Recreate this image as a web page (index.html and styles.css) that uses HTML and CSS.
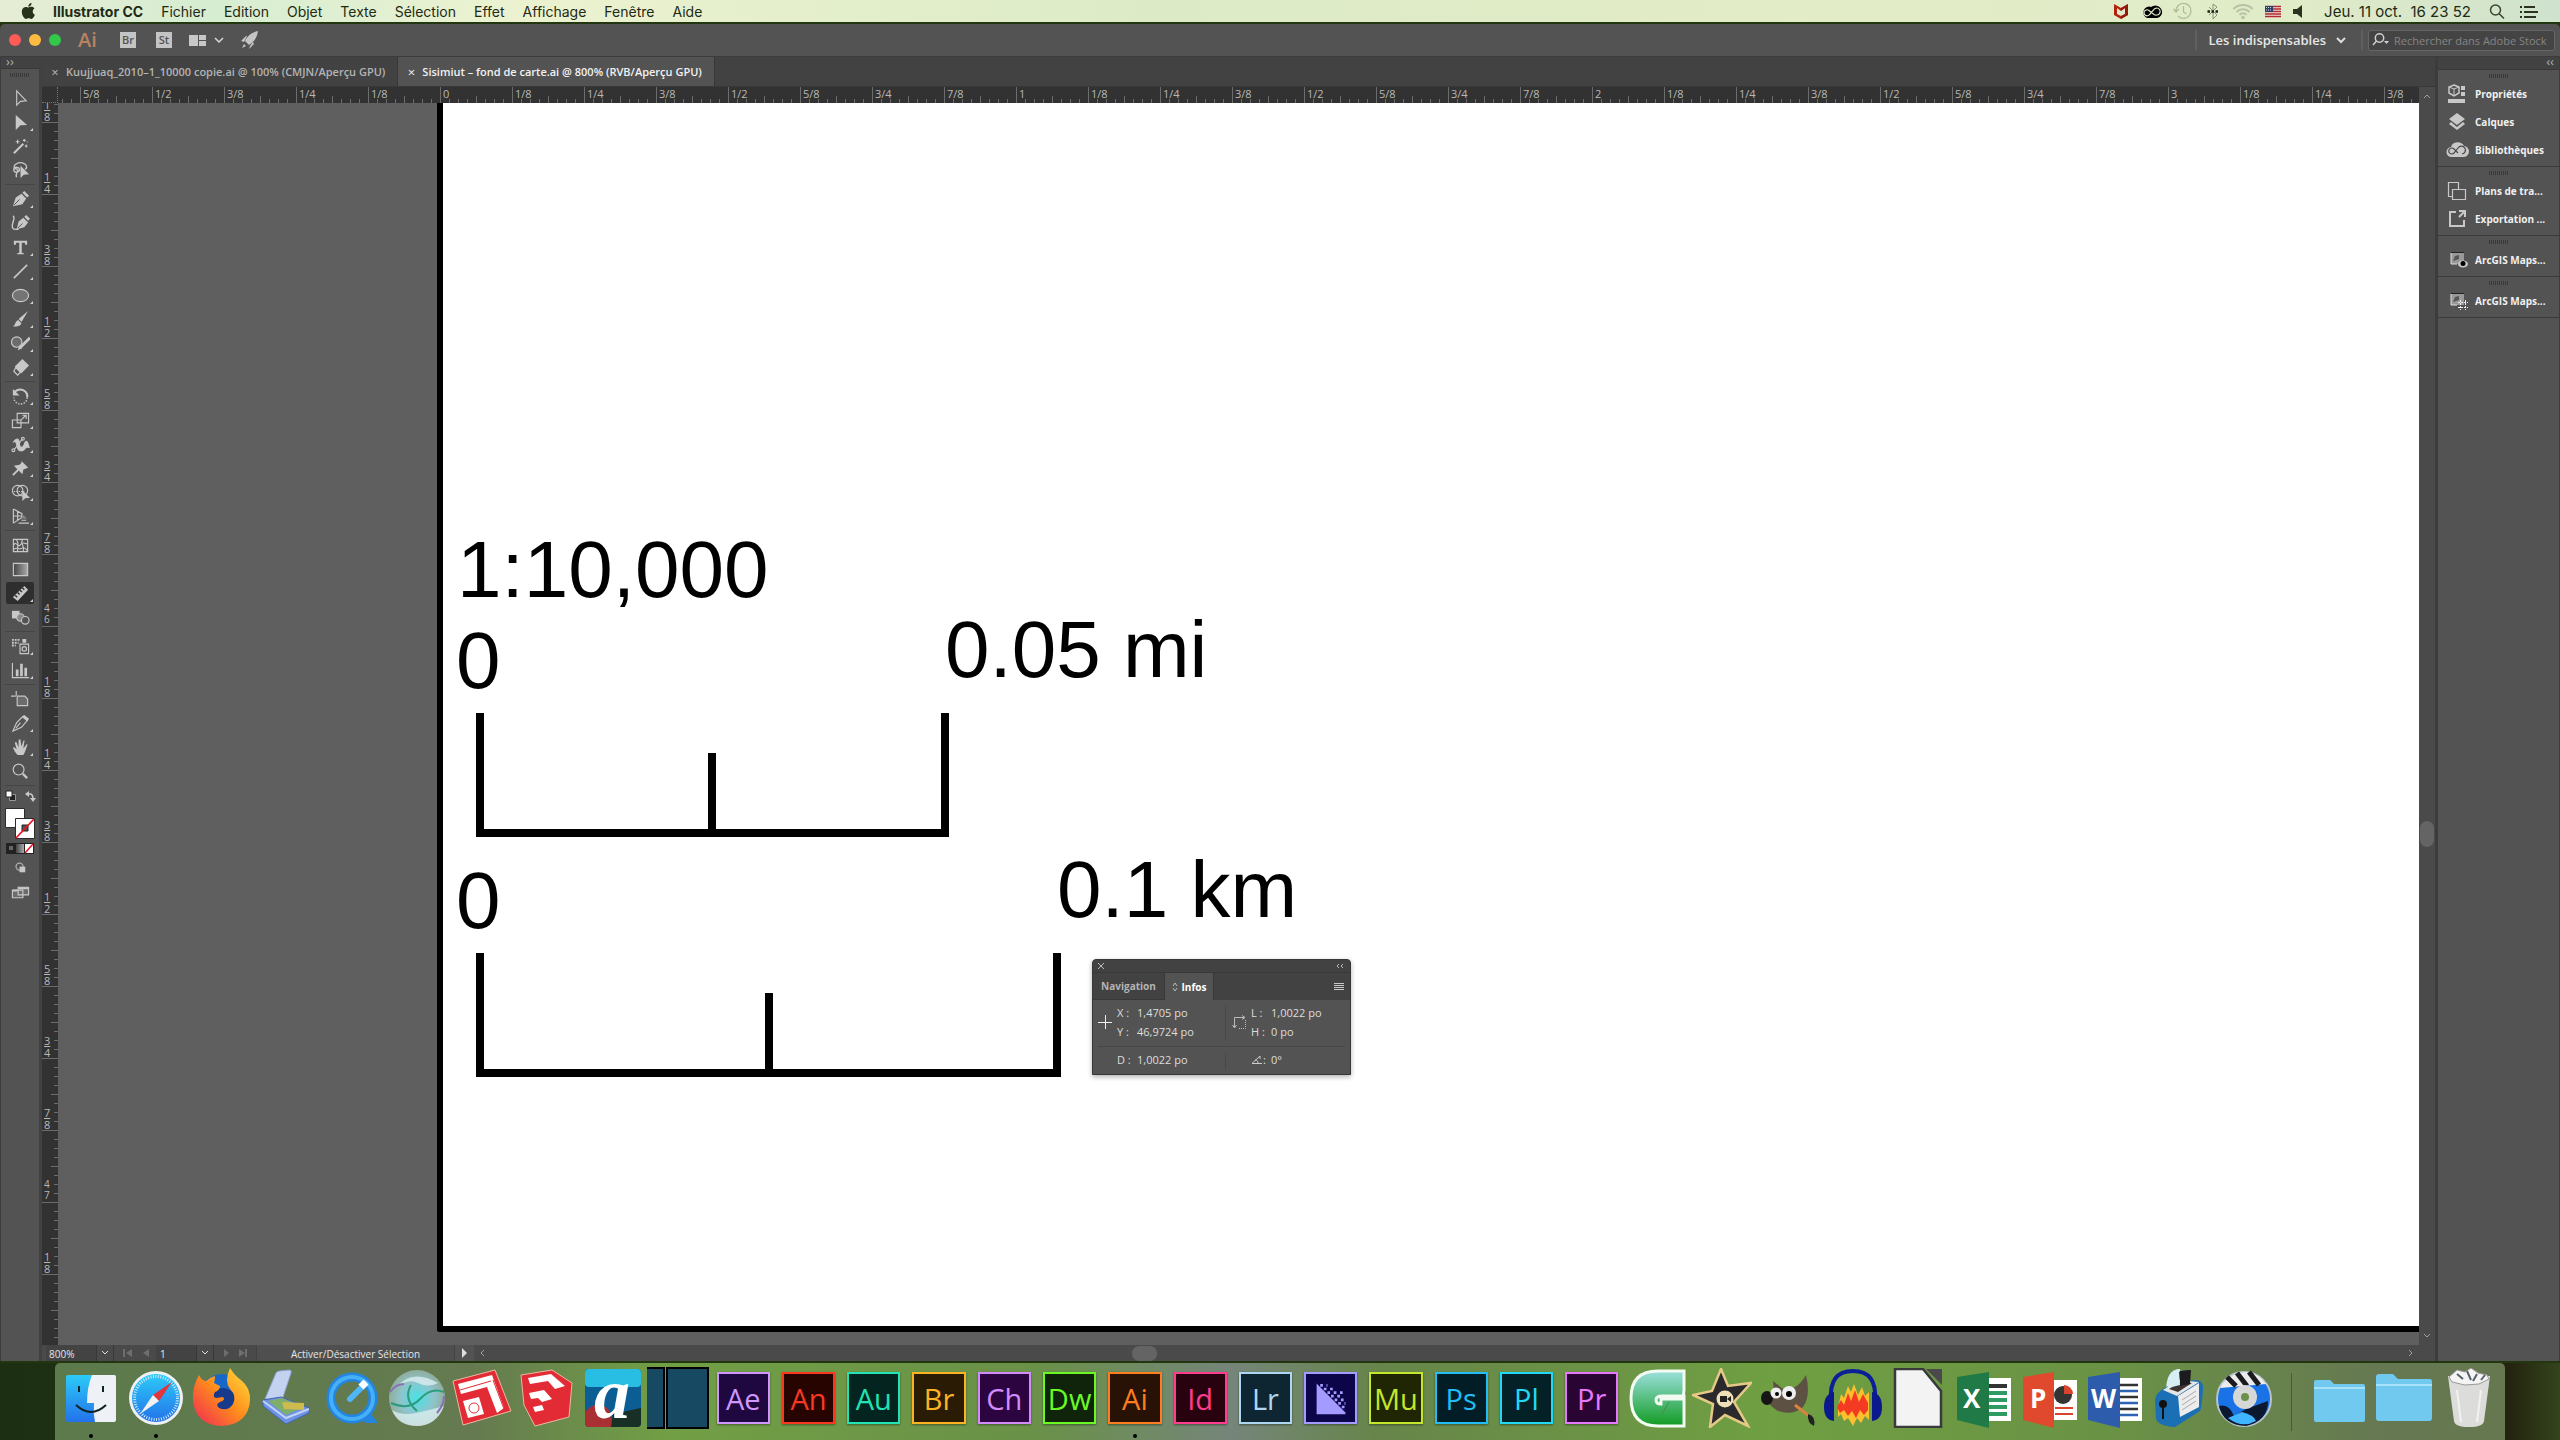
FILE: index.html
```
<!DOCTYPE html>
<html lang="fr">
<head>
    <meta charset="UTF-8">
    <meta name="viewport" content="width=device-width, initial-scale=1.0">
    <title>Illustrator CC</title>
    <link rel="stylesheet" href="styles.css">
</head>
<body>

    <!-- Menu bar -->
    <header class="menubar">
        <nav class="menus">
            <button class="apple" aria-label="Pomme"><svg width="14" height="16" viewBox="1 0 21 24"><path d="M12.152 6.896c-.948 0-2.415-1.078-3.96-1.04-2.04.027-3.91 1.183-4.961 3.014-2.117 3.675-.546 9.103 1.519 12.09 1.013 1.454 2.208 3.09 3.792 3.039 1.52-.065 2.09-.987 3.935-.987 1.831 0 2.35.987 3.96.948 1.637-.026 2.676-1.48 3.676-2.948 1.156-1.688 1.636-3.325 1.662-3.415-.039-.013-3.182-1.221-3.22-4.857-.026-3.04 2.48-4.494 2.597-4.559-1.429-2.09-3.623-2.324-4.39-2.376-2-.156-3.675 1.09-4.61 1.09zM15.53 3.83c.843-1.012 1.4-2.427 1.245-3.83-1.207.052-2.662.805-3.532 1.818-.78.896-1.454 2.338-1.273 3.714 1.338.104 2.715-.688 3.559-1.701"/></svg></button>
            <button class="app-name">Illustrator CC</button>
            <button>Fichier</button>
            <button>Edition</button>
            <button>Objet</button>
            <button>Texte</button>
            <button>Sélection</button>
            <button>Effet</button>
            <button>Affichage</button>
            <button>Fenêtre</button>
            <button>Aide</button>
        </nav>
        <div class="status-icons">
            <svg width="30" height="20" viewBox="0 0 30 20"><path d="M8 3l7 4 7-4v11l-7 4-7-4z" fill="#b3210f"/><path d="M11 7v6l4 2 4-2V7l-4 3z" fill="#e0eac8"/><path d="M15 7l7-4v11l-7 4v-3l4-2V7l-4 3z" fill="#7c1408" opacity=".6"/></svg>
            <svg width="32" height="20" viewBox="0 0 32 20"><path d="M11 17a6 6 0 0 1 0-11q2-1 4 0a7 7 0 0 1 11 4 6 6 0 0 1-5 7z" fill="#000"/><path d="M21 14a3.500 3.500 0 1 0-3.500-5l-4 4.500a3 3 0 1 1-.5-4l5 4a4 4 0 0 0 3 .5" fill="none" stroke="#e0eac8" stroke-width="1.200"/></svg>
            <svg width="30" height="20" viewBox="0 0 30 20" fill="none" stroke="#aebd9c" stroke-width="1.200"><path d="M8 10a7.500 7.500 0 1 1 2 5M5.500 8l2.500 3 3-3M15.500 5v6l3 2"/></svg>
            <svg width="30" height="20" viewBox="0 0 30 20" fill="none" stroke="#87927a"><path d="M11 6l8 8-4 4V3l4 3-8 8"/><path d="M9.500 10.500h11" stroke="#1d2413" stroke-width="2.500" stroke-dasharray="2.500 1.500"/></svg>
            <svg width="30" height="20" viewBox="0 0 30 20" fill="none" stroke="#b7c2a8" stroke-width="2"><path d="M5.500 8a13.500 13.500 0 0 1 19 0M8.500 11a9.200 9.200 0 0 1 13 0M11.500 13.800a5 5 0 0 1 7 0"/><circle cx="15" cy="16.500" r=".8"/></svg>
            <svg width="30" height="20" viewBox="0 0 30 20"><path d="M7 5h16v11H7z" fill="#efe6dc"/><path d="M7 5.500h16M7 8h16M7 10.500h16M7 13h16M7 15.500h16" stroke="#b12a2e" stroke-width="1.300"/><path d="M7 5h8v6H7z" fill="#2f4069"/><path d="M8 6.500h6M8 9h6" stroke="#cdd3dd" stroke-dasharray="1 1"/></svg>
            <svg width="18" height="20" viewBox="0 0 18 20" fill="#2b3320"><path d="M5 8h4l5-4v13l-5-4H5z"/></svg>
            <time class="clock">Jeu. 11 oct.&nbsp; 16 23 52</time>
            <svg width="20" height="20" viewBox="0 0 20 20" fill="none" stroke="#3a4430" stroke-width="1.500"><circle cx="8.500" cy="9" r="5"/><path d="M12 12.500l5 5"/></svg>
            <svg class="list-icon" width="20" height="20" viewBox="0 0 20 20" stroke="#2b3320" stroke-width="2"><path d="M1 6h2M1 11h2M1 16h2M5 6h11M5 11h14M5 16h12"/></svg>
        </div>
    </header>

    <main class="window">

        <!-- Application bar -->
        <div class="appbar">
            <span class="lights"><i class="red"></i><i class="yellow"></i><i class="green"></i></span>
            <span class="ai-mark">Ai</span>
            <button class="square">Br</button>
            <button class="square">St</button>
            <button class="arrange" aria-label="Disposition"><svg width="36" height="18" viewBox="0 0 36 18"><path d="M1 4h9v11H1zM11 4h7v5h-7zM11 10h7v5h-7z" fill="#c8c8c8"/><path d="M27 7l4 4 4-4" fill="none" stroke="#d8d8d8" stroke-width="1.500"/></svg></button>
            <button aria-label="GPU"><svg width="20" height="20" viewBox="0 0 20 20" fill="#c4c4c4"><path d="M18 1C12 2 7 6 5 11l4 4c5-3 8-7 9-14zM6 6L1 11l3 1 3-6zM13 12l-3 4-1 3 5-5zM4 14l-2 4 4-2z"/></svg></button>
            <span class="grow"></span>
            <button class="workspace">Les indispensables <svg width="10" height="10" viewBox="0 0 10 10" fill="none" stroke="#ddd" stroke-width="2"><path d="M1 3l4 4 4-4"/></svg></button>
            <label class="search">
                <svg width="18" height="16" viewBox="0 0 18 16" fill="none" stroke="#cfcfcf" stroke-width="1.500"><circle cx="7.500" cy="6" r="4.200"/><path d="M4.500 9L1 13"/><path d="M12 9h5l-2.500 3z" fill="#cfcfcf" stroke="none"/></svg>
                <input type="text" placeholder="Rechercher dans Adobe Stock" aria-label="Rechercher dans Adobe Stock">
            </label>
        </div>

        <div class="workarea">

            <!-- Tools -->
            <aside class="tools">
                <div class="collapse">››</div>
                <div class="grip"></div>
                <button aria-label="Sélection"><svg class="line" viewBox="0 0 20 20"><path d="M6 2v15l4-4 6-.5z"/></svg></button>
                <button class="more" aria-label="Sélection directe"><svg viewBox="0 0 20 20"><path d="M5 2v16l5-5 7-.5z"/></svg></button>
                <button aria-label="Baguette magique"><svg class="line" viewBox="0 0 20 20"><path d="M3 17L13 7" stroke-width="2.200"/><path d="M7 3v4M5 5h4M14 2v3M12.500 3.500h3M16 8v3M14.500 9.500h3M16.500 5h1"/></svg></button>
                <button aria-label="Lasso"><svg class="line" viewBox="0 0 20 20"><path d="M4 8C1 4 8 1 12 2s6 4 3 7M3 8c0-2 6-2 6 1s-5 4-6 1 4-2 4 0-3 5-1 7" stroke-width="1.400"/><path class="solid" d="M10 5v13l3.500-3.500L19 14z"/></svg></button>
                <hr>
                <button class="more" aria-label="Plume"><svg viewBox="0 0 20 20"><path d="M2 17L5 8l6-4 5 5-4 6zM12 3l2-2 5 5-2 2z"/><path d="M3 16l6-6" stroke="#535353"/></svg></button>
                <button aria-label="Courbure"><svg viewBox="0 0 20 20"><path d="M6 16l2-8 5-4 5 5-4 5zM14 3l2-2 4 4-2 2z"/><path d="M7 15l5-5" stroke="#535353"/><path d="M2 2c4 2-3 9 0 13 1 2 4 1 6 1" fill="none" stroke="#c8c8c8" stroke-width="1.500"/></svg></button>
                <button class="more" aria-label="Texte"><svg viewBox="0 0 20 20"><path d="M3 3h14v4h-2l-.5-2H11.300v10.500l2.200.5v1h-7v-1l2.200-.5V5H5.500L5 7H3z"/></svg></button>
                <button class="more" aria-label="Trait"><svg class="line" viewBox="0 0 20 20"><path d="M3 17L17 3" stroke-width="1.700"/></svg></button>
                <button class="more" aria-label="Ellipse"><svg class="line" viewBox="0 0 20 20"><ellipse cx="10" cy="10" rx="8.500" ry="6.500" fill="#747474"/></svg></button>
                <button class="more" aria-label="Pinceau"><svg viewBox="0 0 20 20"><path d="M18 1L8 9.500l3 3zM7.500 10.500l3.500 3.500c-1 3-5 4-9 3 3-1 2-5 5.500-6.500z"/></svg></button>
                <button class="more" aria-label="Shaper"><svg class="line" viewBox="0 0 20 20"><circle cx="6" cy="8.500" r="5.500" fill="#6c6c6c"/><path d="M20 4L10 14" stroke-width="3"/><path class="solid" d="M9 12l3 3-5 2z"/></svg></button>
                <button class="more" aria-label="Gomme"><svg viewBox="0 0 20 20"><path d="M12 1l7 7-8 8-7-7z"/><path d="M5 10l5 5-3 3-4-4z" fill="none" stroke="#c8c8c8" stroke-width="1.300"/></svg></button>
                <hr>
                <button class="more" aria-label="Rotation"><svg class="line" viewBox="0 0 20 20"><path d="M4 5c6-5 14-1 13 6" stroke-width="2.200"/><path d="M17 11a7 7 0 0 1-14 0" stroke-dasharray="1.500 1.500" stroke-width="1.600"/><path class="solid" d="M2 2v7h7z"/></svg></button>
                <button class="more" aria-label="Mise à l’échelle"><svg class="line" viewBox="0 0 20 20"><path d="M6.500 2.500h12v10h-12zM1.500 9.500h9v8h-9zM11 9l4-4M12 4.500h4v4"/></svg></button>
                <button class="more" aria-label="Largeur"><svg class="line" viewBox="0 0 20 20"><path d="M3 7c4-6 6-1 6 3s4 4 5 0 3-6 5 3c-2 0-3-1-4 1-3 4-7 3-8 0S6 6 3 7z" fill="#c8c8c8"/><path d="M3 16L12 4"/><circle cx="2.500" cy="16" r="1.500"/><circle cx="12.500" cy="4" r="1.500"/></svg></button>
                <button class="more" aria-label="Punaise"><svg viewBox="0 0 20 20"><path d="M11 2l7 7-2 1-3 1-1 5-9-9 6-1 2-2z"/><path d="M8 11l-6 6" stroke="#c8c8c8" stroke-width="2"/></svg></button>
                <button class="more" aria-label="Concepteur de forme"><svg class="line" viewBox="0 0 20 20"><circle cx="7" cy="8" r="5.500"/><circle cx="12" cy="8" r="5.500"/><path d="M3 9h11" stroke-dasharray="1.500 1"/><path class="solid" d="M12 8v11l3-3 5-.5z"/></svg></button>
                <button class="more" aria-label="Grille de perspective"><svg class="line" viewBox="0 0 20 20"><path d="M2.500 2v15M2.500 2l9 5v4l-9 6M2 9.500h10M7 5v9M11 14h5M8 17h11"/><path d="M12 8l5 4h-5z" fill="#888" stroke="none"/></svg></button>
                <hr>
                <button aria-label="Filet"><svg class="line" viewBox="0 0 20 20"><path d="M2.500 3.500h15v13h-15zM3 9c3-4 4 4 7 0s4 0 8-1M3 14c4-3 5 1 8-1s4 0 6 2M6 4c3 5 0 7 1 12M12 4c-3 4 3 6 1 12"/></svg></button>
                <button aria-label="Dégradé"><svg class="line" viewBox="0 0 20 20"><defs><linearGradient id="fade"><stop stop-color="#444"/><stop offset="1" stop-color="#aaa"/></linearGradient></defs><path d="M2.500 3.500h15v13h-15z" fill="url(#fade)"/></svg></button>
                <button class="more active" aria-label="Mesure"><svg viewBox="0 0 20 20"><path d="M14 2l4 4L7 18l-5-4z"/><path d="M12 4l2 2M9.500 6.500l2 2M7 9l2 2M4.500 12l2 2" stroke="#303030" stroke-width="1.500"/></svg></button>
                <button aria-label="Dégradé de formes"><svg class="line" viewBox="0 0 20 20"><path class="solid" d="M1 3h8v8H1z"/><circle cx="10" cy="10" r="4" fill="#888"/><circle cx="15" cy="13" r="4" fill="#535353"/></svg></button>
                <hr>
                <button class="more" aria-label="Pulvérisation"><svg class="line" viewBox="0 0 20 20"><path d="M9.500 7.500h9v10h-9z"/><circle cx="14" cy="12.500" r="2.300"/><path d="M12 5h4M12 3h4" stroke-width="2"/><path d="M1 3h9M1 6h7M1 9h4" stroke-width="2" stroke-dasharray="2 1"/></svg></button>
                <button class="more" aria-label="Graphe"><svg class="line" viewBox="0 0 20 20"><path d="M1.500 2v15.500H19"/><path d="M6.500 9v7M11 3v13M15.500 7v9" stroke-width="2.800"/></svg></button>
                <hr>
                <button aria-label="Plan de travail"><svg class="line" viewBox="0 0 20 20"><path d="M6.500 6.500h8l3 3v7h-11z" fill="#6c6c6c"/><path d="M0 6.500h5M5.500 1v5"/></svg></button>
                <button class="more" aria-label="Tranche"><svg class="line" viewBox="0 0 20 20"><path d="M2 18L6 9l6-6 5 4-6 7z"/><path class="solid" d="M12 2l2-1 5 4-2 3z"/><path d="M5 15l5-6"/></svg></button>
                <button class="more" aria-label="Main"><svg viewBox="0 0 20 20"><path d="M7 18c-2-2-4-5-5-8 1-1 2 0 4 2L4 5c1-1 2-1 2 0l2 5V2c1-1 2-1 2 0l1 7 2-6c1-1 2 0 1 1l-1 7 3-4c1-1 2 0 1 1-1 3-2 7-4 10z"/></svg></button>
                <button aria-label="Zoom"><svg class="line" viewBox="0 0 20 20"><circle cx="8" cy="8" r="5.700"/><path d="M12.500 12.500L17 17" stroke-width="2.400"/></svg></button>
                <hr>
                <div class="swap">
                    <svg width="12" height="12" viewBox="0 0 12 12"><path d="M4.500 4.500h6v6h-6z" fill="#222" stroke="#999"/><path d="M1 1h6v6H1z" fill="#fff" stroke="#222"/></svg>
                    <svg width="12" height="12" viewBox="0 0 12 12" fill="none" stroke="#c8c8c8"><path d="M2 4h4q3 0 3 5" stroke-width="1.500"/><path d="M5 1v6L1 4zM6 8h6l-3 4z" fill="#c8c8c8" stroke="none"/></svg>
                </div>
                <svg class="fill-stroke" width="30" height="31" viewBox="0 0 30 31"><path d="M.5.500h19v19H.5z" fill="#fff" stroke="#2c2c2c"/><path d="M10.500 10.500h19v20h-19z" fill="#fff" stroke="#2c2c2c"/><path d="M17 17h6v6h-6z" fill="#535353" stroke="#222"/><path d="M11 30L29 11" stroke="#f01020" stroke-width="1.700"/></svg>
                <svg class="paint-mode" width="28" height="11" viewBox="0 0 28 11"><path d="M0 0h28v11H0z" fill="#222"/><path d="M3 3h4v4H3z" fill="#666"/><path d="M10 1h8v9h-8z" fill="url(#fade)"/><path d="M19 1h8v9h-8z" fill="#fff"/><path d="M19 10l8-9" stroke="#f01020" stroke-width="1.500"/></svg>
                <button aria-label="Mode de dessin"><svg viewBox="0 0 20 20"><circle cx="9" cy="8" r="3.700" fill="none" stroke="#b0b0b0" stroke-width="1.300"/><path d="M9 8h6v6H9z"/></svg></button>
                <button aria-label="Mode d’écran"><svg class="line" viewBox="0 0 20 20"><path d="M1.500 7.500h11v8h-11zM7.500 4.500h11v8h-11z" fill="#6c6c6c"/><path d="M8 5.500h10M2 8h5" stroke-width="2"/></svg></button>
            </aside>

            <!-- Document -->
            <section class="document">
                <div class="tabs">
                    <div class="tab"><button aria-label="Fermer">×</button><span>Kuujjuaq_2010–1_10000 copie.ai @ 100% (CMJN/Aperçu GPU)</span></div>
                    <div class="tab current"><button aria-label="Fermer">×</button><span>Sisimiut – fond de carte.ai @ 800% (RVB/Aperçu GPU)</span></div>
                </div>
                <div class="view">
                    <div class="corner"></div>
                    <div class="ruler-h">
                        <span></span><span>5/8</span><span>1/2</span><span>3/8</span><span>1/4</span><span>1/8</span>
                        <span>0</span><span>1/8</span><span>1/4</span><span>3/8</span><span>1/2</span><span>5/8</span><span>3/4</span><span>7/8</span>
                        <span>1</span><span>1/8</span><span>1/4</span><span>3/8</span><span>1/2</span><span>5/8</span><span>3/4</span><span>7/8</span>
                        <span>2</span><span>1/8</span><span>1/4</span><span>3/8</span><span>1/2</span><span>5/8</span><span>3/4</span><span>7/8</span>
                        <span>3</span><span>1/8</span><span>1/4</span><span>3/8</span>
                    </div>
                    <div class="ruler-v">
                        <span><u>1</u>8</span><span><u>1</u>4</span><span><u>3</u>8</span><span><u>1</u>2</span><span><u>5</u>8</span><span><u>3</u>4</span><span><u>7</u>8</span>
                        <span class="whole"><b>4</b>6</span>
                        <span><u>1</u>8</span><span><u>1</u>4</span><span><u>3</u>8</span><span><u>1</u>2</span><span><u>5</u>8</span><span><u>3</u>4</span><span><u>7</u>8</span>
                        <span class="whole"><b>4</b>7</span>
                        <span><u>1</u>8</span><span></span>
                    </div>
                    <div class="canvas">
                        <div class="artboard">
                            <!-- Scale bars -->
                            <svg width="1976" height="1223" viewBox="0 0 1976 1223">
                                <g class="map-text">
                                    <text x="14" y="494">1:10,000</text>
                                    <text x="13" y="585">0</text>
                                    <text x="502" y="574">0.05 mi</text>
                                    <text x="13" y="825">0</text>
                                    <text x="614" y="814">0.1 km</text>
                                </g>
                                <g class="map-line">
                                    <path d="M37 610V730H502V610M269 650V730"/>
                                    <path d="M37 850V970H614V850M326 890V970"/>
                                </g>
                            </svg>
                        </div>
                        <!-- Floating Infos panel -->
                        <div class="infos">
                            <div class="infos-head">
                                <svg width="8" height="8" viewBox="0 0 8 8"><path d="M1 1l6 6M7 1L1 7"/></svg>
                                <svg width="8" height="8" viewBox="0 0 8 8"><path d="M3 2L1 4l2 2M7 2L5 4l2 2"/></svg>
                            </div>
                            <div class="infos-tabs">
                                <button>Navigation</button>
                                <button class="current"><svg width="6" height="10" viewBox="0 0 6 10" fill="none" stroke="#bbb"><path d="M1 4l2-3 2 3M1 6l2 3 2-3"/></svg>Infos</button>
                                <svg class="burger" width="10" height="9" viewBox="0 0 10 9" stroke="#c8c8c8"><path d="M0 1.500h10M0 3.500h10M0 5.500h10M0 7.500h10"/></svg>
                            </div>
                            <div class="infos-grid">
                                <svg width="14" height="14" viewBox="0 0 14 14" stroke="#eee"><path d="M7.500 0v14M0 7.500h14"/></svg>
                                <dl><dt>X :</dt><dd>1,4705 po</dd><dt>Y :</dt><dd>46,9724 po</dd></dl>
                                <svg width="14" height="14" viewBox="0 0 14 14" fill="none" stroke="#bbb"><path d="M2.500 12V2.500H12M10 .5l3 2-3 2M.5 10l2 3 2-3"/><path d="M13.500 5v8.500H6" stroke-dasharray="1 1"/></svg>
                                <dl><dt>L :</dt><dd>1,0022 po</dd><dt>H :</dt><dd>0 po</dd></dl>
                            </div>
                            <div class="infos-grid last">
                                <span></span>
                                <dl><dt>D :</dt><dd>1,0022 po</dd></dl>
                                <span></span>
                                <dl><dt><svg width="12" height="9" viewBox="0 0 12 9" fill="none" stroke="#ccc"><path d="M9 1L1 8.500h10M4 5c2 0 3 1 3 3M9 1v3"/></svg>:</dt><dd>0°</dd></dl>
                            </div>
                        </div>
                    </div>
                    <div class="scroll-v">
                        <svg width="8" height="6" viewBox="0 0 8 6"><path d="M1 5l3-3 3 3"/></svg>
                        <i></i>
                        <svg width="8" height="6" viewBox="0 0 8 6"><path d="M1 1l3 3 3-3"/></svg>
                    </div>
                </div>
                <div class="statusbar">
                    <input class="zoom" type="text" value="800%" aria-label="Zoom">
                    <button class="drop" aria-label="Niveaux de zoom"><svg width="8" height="6" viewBox="0 0 8 6"><path d="M1 1l3 3 3-3"/></svg></button>
                    <svg class="nav-arrows" width="42" height="10" viewBox="0 0 42 10"><path d="M9 1v8h2V1zM18 1v8l-6-4zM35 1v8l-6-4z"/></svg>
                    <input class="page" type="text" value="1" aria-label="Plan de travail">
                    <button class="drop" aria-label="Plans de travail"><svg width="8" height="6" viewBox="0 0 8 6"><path d="M1 1l3 3 3-3"/></svg></button>
                    <svg class="nav-arrows" width="42" height="10" viewBox="0 0 42 10"><path d="M10 1v8l5-4zM25 1v8l6-4zM31 1v8h2V1z"/></svg>
                    <span class="message">Activer/Désactiver Sélection</span>
                    <button class="play" aria-label="Afficher"><svg width="6" height="10" viewBox="0 0 6 10"><path d="M0 0v10l5-5z"/></svg></button>
                    <div class="scroll-h">
                        <svg width="6" height="8" viewBox="0 0 6 8"><path d="M5 1L2 4l3 3"/></svg>
                        <i></i>
                        <svg width="6" height="8" viewBox="0 0 6 8"><path d="M1 1l3 3-3 3"/></svg>
                    </div>
                </div>
            </section>

            <!-- Panel dock -->
            <aside class="panels">
                <div class="collapse">‹‹</div>
                <div class="group">
                    <div class="grip"></div>
                    <button><svg viewBox="0 0 20 20"><path d="M7 1l5 2v6l-5 3-5-3V3z" fill="none" stroke="#c8c8c8" stroke-width="1.500"/><path d="M2 3l5 2 5-2M7 5v7" fill="none" stroke="#c8c8c8"/><path d="M14 2h4v4h-4zM14 8h4v4h-4zM1 15h17v4H1z"/></svg>Propriétés</button>
                    <button><svg viewBox="0 0 20 20"><path d="M10 1l8 6-8 6-8-6zM4 10l6 5 6-5 2 2-8 6-8-6z"/></svg>Calques</button>
                    <button><svg viewBox="0 0 20 20"><path d="M5 17a5 5 0 0 1-1-10 7 6.500 0 0 1 13-1 5.500 5.500 0 0 1-1 11z"/><path d="M15 14a4 4 0 1 0-4-6l-4 5a3 3 0 1 1 0-4l4 4" fill="none" stroke="#4a4a4a" stroke-width="1.200"/></svg>Bibliothèques</button>
                </div>
                <div class="group">
                    <div class="grip"></div>
                    <button><svg class="line" viewBox="0 0 20 20"><path d="M1.500 1.500h10v14h-10z"/><path d="M5.500 8.500h13v10h-13z" fill="#535353"/></svg>Plans de tra...</button>
                    <button><svg class="line" viewBox="0 0 20 20"><path d="M9 3H3v14h14v-6" stroke-width="2"/><path d="M12 2h6v6M17.500 2.500L12 8" stroke-width="2"/></svg>Exportation ...</button>
                </div>
                <div class="group">
                    <div class="grip"></div>
                    <button><svg viewBox="0 0 20 20"><path d="M4 3h13v11H4z" fill="#999"/><path d="M4 2.500h13" stroke="#222"/><path d="M4 3v11h6" fill="none" stroke="#ddd"/><path d="M6 11l2-5 4-1v4z" fill="#555"/><ellipse cx="16" cy="14" rx="5" ry="3.500"/><circle cx="16" cy="13.500" r="2.500" fill="#000"/></svg>ArcGIS Maps...</button>
                </div>
                <div class="group">
                    <div class="grip"></div>
                    <button><svg viewBox="0 0 20 20"><path d="M4 3h13v11H4z" fill="#999"/><path d="M4 2.500h13" stroke="#222"/><path d="M4 3v11h6" fill="none" stroke="#ddd"/><path d="M6 11l2-5 4-1v4z" fill="#555"/><path d="M13.500 9v10M18.500 9v10M11 11.500h10M11 16.500h10" stroke="#eee" stroke-dasharray="2 1"/></svg>ArcGIS Maps...</button>
                </div>
            </aside>
        </div>
    </main>

    <!-- Dock -->
    <footer class="desktop">
        <div class="dock">
            <button class="running" aria-label="Finder"><svg viewBox="0 0 60 60"><defs><linearGradient id="sky" x2="0" y2="1"><stop stop-color="#2ccbf8"/><stop offset="1" stop-color="#2372ea"/></linearGradient></defs><rect x="5" y="7" width="50" height="47" rx="2" fill="url(#sky)"/><path d="M31 7h22q2 0 2 2v43q0 2-2 2H34q-2-9-1-19h-7q0-16 5-28z" fill="#eef2f6"/><path d="M18 18v6M42 18v6M15 37q15 14 30 0" fill="none" stroke="#122" stroke-width="2"/></svg></button>
            <button class="running" aria-label="Safari"><svg viewBox="0 0 60 60"><circle cx="30" cy="30" r="27" fill="#eef1f3"/><circle cx="30" cy="30" r="24" fill="url(#sky)"/><circle cx="30" cy="30" r="21.500" fill="none" stroke="#cdeafa" stroke-width="3" stroke-dasharray="1 1.500"/><path d="M46 14L33 33l-6-6z" fill="#e5333a"/><path d="M14 46l13-19 6 6z" fill="#f2f2f2"/></svg></button>
            <button aria-label="Firefox"><svg viewBox="0 0 60 60"><defs><linearGradient id="fox" x1="1" x2="0" y2="1"><stop stop-color="#ffe23c"/><stop offset=".5" stop-color="#ff8a1c"/><stop offset="1" stop-color="#f0245a"/></linearGradient></defs><circle cx="31" cy="29" r="23" fill="#1767c8"/><circle cx="32" cy="33" r="13" fill="#173a8c"/><path d="M8 7q3 6 7 6 4-4 9-5 0 4-1 7l6 3q0 4-5 6-3 5 1 6l7-1q3 3-3 5-5 2-1 6 9 4 14-4 4-8-3-15-6-8 0-21 5 8 11 12 10 8 9 21-2 23-28 25Q4 57 2 32 1 19 8 7z" fill="url(#fox)"/></svg></button>
            <button aria-label="Transfert d’images"><svg viewBox="0 0 60 60"><path d="M9 31L20 5q1-2 4-2l9-1q3 0 2 3L26 32z" fill="#c3d2f1" stroke="#8fa4d3"/><path d="M7 32l18-3 28 11v5L30 56 7 38z" fill="#6c93e6" stroke="#4562ac"/><path d="M7 33l23 17 23-9" fill="none" stroke="#c3d2f1" stroke-width="2"/><path d="M12 33l14-3 22 9-18 8z" fill="#7fae6a"/><path d="M26 34l22 1v7l-20-1z" fill="#cdbb4e"/></svg></button>
            <button aria-label="QuickTime"><svg viewBox="0 0 60 60"><path d="M46 42l10 13H44l-5-5z" fill="#2385e0"/><circle cx="30" cy="30" r="21" fill="none" stroke="#2385e0" stroke-width="9"/><circle cx="30" cy="30" r="21" fill="none" stroke="#45b0f7" stroke-width="4"/><path d="M28 31L43 16" stroke="#4fb6fa" stroke-width="6" stroke-linecap="round"/><path d="M39 19l5-5" stroke="#fff" stroke-width="7"/></svg></button>
            <button aria-label="ArcGIS"><svg viewBox="0 0 60 60"><defs><radialGradient id="globe"><stop stop-color="#48e2e6"/><stop offset=".6" stop-color="#8fc4cc"/><stop offset="1" stop-color="#8fae9d"/></radialGradient></defs><circle cx="30" cy="30" r="28" fill="url(#globe)"/><path d="M9 20Q24 0 51 15q-10 5-20 0t-22 5zM5 42q10 6 24 3t28-7q-8 20-27 20T5 42z" fill="#d9eef0" opacity=".8"/><path d="M4 35q18 8 29-4t24-7M24 17q-8 14 6 26" fill="none" stroke="#2c9c7c" stroke-width="2"/><path d="M3 24q6-8 14-8M50 45q7-8 7-17" fill="none" stroke="#8d6fb5" stroke-width="2"/></svg></button>
            <button aria-label="LayOut"><svg viewBox="0 0 60 60"><path d="M1 13L43 2l16 41L11 57z" fill="#e32b35" stroke="#e9b9a4"/><path d="M6 16l34-9 12 33-7 5-10-26-26 7zM11 33l16-4 5 17-16 4z" fill="#fff"/><circle cx="22" cy="40" r="5" fill="none" stroke="#e32b35"/><path d="M8 22l31-9M41 12l11 29" stroke="#e32b35"/></svg></button>
            <button aria-label="SketchUp"><svg viewBox="0 0 60 60"><path d="M4 7l31-5 20 13-3 34-34 9L7 37z" fill="#e32b35" stroke="#e9b9a4"/><path d="M11 10l23-4 14 12-10 3-7-8-18 3zM12 25l15-3 8 9-10 3-4-4-7 1zM16 39l9-2 2 5-9 2z" fill="#fff"/></svg></button>
            <button aria-label="Art Text"><svg viewBox="0 0 60 60"><rect x="2" y="1" width="56" height="58" rx="4" fill="#0b5d93"/><rect x="2" y="1" width="56" height="18" rx="4" fill="#28bde2"/><path d="M2 44q12-14 24-2l4 17H6q-4 0-4-4z" fill="#a92f32"/><path d="M30 46l28-6v15q0 4-4 4H28z" fill="#182f25"/><text class="art-a" x="11" y="50">a</text></svg></button>
            <button class="tile" aria-label="Sans titre"><i></i><i></i></button>
            <button class="adobe ae">Ae</button>
            <button class="adobe an">An</button>
            <button class="adobe au">Au</button>
            <button class="adobe br">Br</button>
            <button class="adobe ch">Ch</button>
            <button class="adobe dw">Dw</button>
            <button class="adobe ai running">Ai</button>
            <button class="adobe id">Id</button>
            <button class="adobe lr">Lr</button>
            <button class="adobe me" aria-label="Media Encoder"><svg viewBox="0 0 40 40"><path d="M4 4l32 32v2H4z" fill="#a39bff"/><path d="M8 6h8M12 10h14M16 14h20M20 18h12M24 22h12M28 26h8M32 30h4" stroke="#a39bff" stroke-width="3" stroke-dasharray="3 4"/></svg></button>
            <button class="adobe mu">Mu</button>
            <button class="adobe ps">Ps</button>
            <button class="adobe pl">Pl</button>
            <button class="adobe pr">Pr</button>
            <button aria-label="Graphic"><svg viewBox="0 0 60 60"><defs><linearGradient id="leaf" x2="0" y2="1"><stop stop-color="#9be0dd"/><stop offset="1" stop-color="#129b22"/></linearGradient></defs><path d="M57 3H31Q4 3 4 30q0 28 27 28h26V28H35q-6 0-6 4 0 4 5 4v-5h22l1-9z" fill="url(#leaf)" stroke="#f2faf2" stroke-width="3"/><path d="M42 34l-7 12" stroke="#4c8a50"/></svg></button>
            <button aria-label="iMovie"><svg viewBox="0 0 60 60"><path d="M29 1l7 17 23-3-17 19 14 24-23-11-15 12 3-23L1 27l19-4z" fill="#2a2a2c" stroke="#e6c987" stroke-width="2.500"/><circle cx="33" cy="31" r="8.500" fill="#efe0b8"/><path d="M28 28h7v6h-7zM35 31l4-3v6z" fill="#222"/></svg></button>
            <button aria-label="GIMP"><svg viewBox="0 0 60 60"><path d="M15 13l10 8q14 2 23-14 5 21-3 32-10 9-25 4Q11 38 8 30l8-6z" fill="#5c5142"/><ellipse cx="9" cy="30" rx="6" ry="7" fill="#161616"/><circle cx="18" cy="25" r="5.500" fill="#eee"/><circle cx="31" cy="25" r="7" fill="#eee"/><circle cx="19" cy="26" r="2"/><circle cx="31" cy="26" r="3"/><path d="M37 37l14 11" stroke="#d88140" stroke-width="3"/><path d="M50 46q8 2 6 12-7-3-6-12z" fill="#222"/></svg></button>
            <button aria-label="Audacity"><svg viewBox="0 0 60 60"><path d="M8 32Q6 3 30 3t22 29" fill="none" stroke="#0b1f98" stroke-width="4"/><path d="M15 40l3-14 3 4 4-12 3 6 3-8 4 11 4-8 3 9 4-4v28l-4-4-4 7-4-5-4 8-5-8-4 3-3-7-3 3z" fill="#fdc02c"/><path d="M14 39l4-7 3 5 4-12 3 8 4-11 4 12 4-8 5 9v7l-4 5-4-5-4 8-4-7-4 5-4-6-4 3z" fill="#f53a24"/><path d="M11 24v29Q1 52 1 39t10-15zM49 24v29q10-1 10-14T49 24z" fill="#0a1a8c"/></svg></button>
            <button aria-label="LibreOffice"><svg viewBox="0 0 60 60"><path d="M7 1h28l18 22v36H7z" fill="#f3f3f3" stroke="#3a3a3c" stroke-width="2.500"/><path d="M38 1h16v16z" fill="#4a4a4c"/></svg></button>
            <button aria-label="Excel"><svg viewBox="0 0 60 60"><path d="M30 10h28v43H30z" fill="#fff"/><path d="M36 18h18M36 25h18M36 32h18M36 39h18M36 46h18" stroke="#2f9b63" stroke-width="4"/><path d="M36 18h18" stroke="#333" stroke-width="4"/><path d="M4 9l32-5v56L4 52z" fill="#1f7a47"/><text class="office" x="10" y="40">X</text></svg></button>
            <button aria-label="PowerPoint"><svg viewBox="0 0 60 60"><path d="M30 12h28v40H30z" fill="#fff"/><circle cx="44" cy="27" r="9" fill="#333"/><path d="M45 26v-9a9 9 0 0 1 9 9z" fill="#d8452c"/><path d="M36 40h18M36 46h18" stroke="#d8452c" stroke-width="2"/><path d="M4 9l31-5v56L4 52z" fill="#e0492e"/><text class="office" x="11" y="40">P</text></svg></button>
            <button aria-label="Word"><svg viewBox="0 0 60 60"><path d="M30 10h28v43H30z" fill="#fff"/><path d="M36 17h18M36 29h18M36 41h18" stroke="#333" stroke-width="2.500"/><path d="M36 23h18M36 35h18M36 47h18" stroke="#2e63b4" stroke-width="2.500"/><path d="M4 9l32-5v56L4 52z" fill="#2c5cab"/><text class="office" x="7" y="40">W</text></svg></button>
            <button aria-label="Toast"><svg viewBox="0 0 60 60"><path d="M17 24Q17 1 31 1l3 20z" fill="#d8eef5"/><path d="M28 4l13-2-2 16-12 5z" fill="#1b1b1f"/><path d="M6 33q0-7 8-12l12-7 22-2q6 1 6 8-1 19-3 23L26 59Q8 58 7 50z" fill="#1a6fb5"/><path d="M14 22l15-10 21 2-22 14z" fill="#e4e4e4"/><path d="M20 21l11-7 12 1-14 9z" fill="#3c3533"/><path d="M19 20Q17 5 30 2l1 15z" fill="#d8eef5"/><path d="M31 3l11-1-1 14-10 2z" fill="#1b1b1f"/><path d="M29 28l21-13v24L31 49z" fill="#ececec"/><path d="M33 32l14-9M33 37l14-9M33 42l14-9" stroke="#aaa"/><path d="M14 35v16" stroke="#111" stroke-width="2"/><circle cx="14" cy="36" r="4" fill="#111"/></svg></button>
            <button aria-label="iDVD"><svg viewBox="0 0 60 60"><circle cx="30" cy="31" r="27" fill="#1a73e6" stroke="#b9c3cc" stroke-width="2"/><path d="M8 16Q18 4 32 4q13 1 20 12l-46 4z" fill="#ececec"/><path d="M13 9l9 9M23 5l10 13M35 4l10 13" stroke="#1b1b1f" stroke-width="5"/><path d="M5 38q10-3 15 10l12-7 22-8q0 20-22 25Q9 57 5 38z" fill="#0c1830"/><path d="M14 50l14-6q12 3 14 9-14 8-28-3z" fill="#3fb4ff"/><circle cx="31" cy="29" r="12" fill="#d6d8d8"/><circle cx="31" cy="29" r="4" fill="#6b9047"/></svg></button>
            <span class="rule"></span>
            <button aria-label="Documents"><svg viewBox="0 0 60 60"><path d="M5 14q0-2 2-2h14l4 4h29q2 0 2 2v34q0 2-2 2H7q-2 0-2-2z" fill="#72c9ef"/><path d="M5 20h51" stroke="#a6e2fa" stroke-width="2"/></svg></button>
            <button aria-label="Téléchargements"><svg viewBox="0 0 60 60"><path d="M2 9q0-3 3-3h14l5 5h32q2 0 2 3v36q0 3-3 3H5q-3 0-3-3z" fill="#72c9ef"/><path d="M2 17h56" stroke="#a6e2fa" stroke-width="2"/></svg></button>
            <button aria-label="Corbeille"><svg viewBox="0 0 60 60"><path d="M9 8l6 45q1 6 15 6t15-6l6-45z" fill="#dcdcda"/><path d="M10 9l8-7 8 2 6-4 7 5 9 2 2 4-10 5-14 1-13-3z" fill="#f4f4f4" stroke="#999"/><path d="M18 6l6 5M28 3l4 9M38 6l-4 7M42 12l4-5" stroke="#55606c" stroke-width="2"/><path d="M18 22l4 32M42 22l-4 32" stroke="#f2f2f2" stroke-width="2"/></svg></button>
        </div>
    </footer>
</body>
</html>
```
FILE: styles.css
```
* {
    box-sizing: border-box;
}
body {
    margin: 0;
    height: 100vh;
    display: flex;
    flex-direction: column;
    font-family: "Open Sans", "Noto Sans", sans-serif;
    font-size: 10px;
    color: #e6e6e6;
    background: #22360f;
    overflow: hidden;
}
button {
    margin: 0;
    padding: 0;
    border: none;
    background: none;
    color: inherit;
    font: inherit;
    white-space: nowrap;
}
input {
    padding: 0;
    border: none;
    color: inherit;
    font: inherit;
    min-width: 0;
}
svg {
    display: block;
    flex: none;
}
.grow {
    flex: 1;
}

/* Menu bar */
.menubar {
    height: 22px;
    flex: none;
    display: flex;
    justify-content: space-between;
    align-items: center;
    font-family: Inter, sans-serif;
    font-size: 14px;
    color: #1f2a14;
    background: linear-gradient(90deg, #e6edd4, #d6edd2 8%, #ecf2d0 20%, #dcebc6 45%, #e2ecc6 70%, #e0ebc8 90%, #cfe2cd);
}
.menus {
    display: flex;
    align-items: center;
    gap: 18px;
    padding-left: 21px;
}
.apple {
    fill: #26321a;
}
.app-name {
    font-weight: 700;
}
.status-icons {
    display: flex;
    align-items: center;
    padding-right: 21px;
}
.clock {
    font-size: 15px;
    padding: 0 16px 0 18px;
}
.list-icon {
    margin-left: 12px;
}

/* Window */
.window {
    flex: 1;
    min-height: 0;
    margin: 2px 0;
    display: flex;
    flex-direction: column;
    background: #535353;
    border-radius: 5px 5px 0 0;
}
.appbar {
    height: 33px;
    flex: none;
    display: flex;
    align-items: center;
    border-bottom: 1px solid #3c3c3c;
    padding-right: 5px;
}
.lights {
    display: flex;
    gap: 8px;
    padding-left: 9px;
}
.lights i {
    width: 12px;
    height: 12px;
    border-radius: 50%;
}
.red { background: #fc5b57; }
.yellow { background: #fdbc40; }
.green { background: #34c84a; }
.ai-mark {
    width: 42px;
    margin-left: 17px;
    font-size: 20px;
    font-weight: 600;
    line-height: 24px;
    color: #b98262;
}
.square {
    width: 16px;
    height: 16px;
    margin-right: 20px;
    background: #c4c4c4;
    color: #535353;
    font-size: 11px;
    font-weight: 600;
    line-height: 16px;
}
.arrange {
    margin: 0 16px 0 -4px;
}
.workspace {
    display: flex;
    align-items: center;
    gap: 10px;
    height: 20px;
    padding: 0 15px 0 12px;
    margin-right: 5px;
    border-left: 2px solid #606060;
    border-right: 2px solid #606060;
    font-size: 13px;
    font-weight: 600;
}
.search {
    display: flex;
    align-items: center;
    gap: 4px;
    width: 187px;
    height: 21px;
    padding: 0 3px;
    border: 1px solid #666;
    border-radius: 3px;
    background: #444;
}
.search input {
    flex: 1;
    background: none;
    font-size: 11px;
}
.search input::placeholder {
    color: #858585;
    opacity: 1;
}
.workarea {
    flex: 1;
    min-height: 0;
    display: flex;
}

/* Tools */
.tools {
    width: 42px;
    flex: none;
    display: flex;
    flex-direction: column;
    border-left: 1px solid #3c3c3c;
    border-right: 3px solid #414141;
}
.collapse {
    height: 12px;
    flex: none;
    padding: 0 5px;
    background: #424242;
    border-bottom: 1px solid #383838;
    color: #b0b0b0;
    font-size: 13px;
    line-height: 9px;
}
.grip {
    width: 19px;
    height: 4px;
    background: repeating-linear-gradient(90deg, #3a3a3a 0 1px, transparent 1px 2px);
}
.tools .grip {
    margin: 4px 9px 9px;
}
.tools button {
    position: relative;
    height: 24px;
    flex: none;
    display: flex;
    align-items: center;
    justify-content: center;
}
.tools button svg {
    width: 19px;
    height: 19px;
    fill: #c8c8c8;
}
.line {
    stroke: #c8c8c8;
    stroke-width: 1.2;
}
.tools button .line,
.panels button .line {
    fill: none;
}
.line .solid {
    fill: #c8c8c8;
    stroke: none;
}
.tools .more::after {
    content: "";
    position: absolute;
    right: 6px;
    bottom: 3px;
    border-left: 3px solid transparent;
    border-bottom: 3px solid #d0d0d0;
}
.tools .active {
    margin: 1px 5px;
    height: 22px;
    border-radius: 2px;
    background: #2e2e2e;
}
.tools .active::after {
    right: 1px;
    bottom: 2px;
}
.tools hr {
    width: 30px;
    height: 1px;
    margin: 2px 4px;
    border: none;
    background: #454545;
    flex: none;
}
.swap {
    display: flex;
    justify-content: space-between;
    padding: 2px 3px 6px 4px;
}
.fill-stroke {
    margin-left: 4px;
}
.paint-mode {
    margin: 4px 0 2px 5px;
}

/* Document */
.document {
    flex: 1;
    min-width: 0;
    display: flex;
    flex-direction: column;
}
.tabs {
    height: 30px;
    flex: none;
    display: flex;
    background: #424242;
    border-bottom: 1px solid #383838;
}
.tab {
    display: flex;
    align-items: center;
    gap: 5px;
    padding: 0 12px 0 7px;
    border-right: 1px solid #383838;
    color: #b4b4b4;
    font-size: 11px;
    font-weight: 600;
}
.tab button {
    width: 12px;
    font-size: 13px;
    font-weight: 400;
}
.tab.current {
    background: #535353;
    color: #f2f2f2;
}
.view {
    flex: 1;
    min-height: 0;
    display: grid;
    grid-template-columns: 16px 1fr 16px;
    grid-template-rows: 16px 1fr;
}
.corner {
    background: #323232;
    border-right: 1px dotted #777;
    border-bottom: 1px dotted #777;
}
.ruler-h,
.ruler-v {
    display: flex;
    overflow: hidden;
    background: #323232;
    color: #b8b8b8;
    font-size: 11px;
}
.ruler-h span {
    width: 72px;
    flex: none;
    padding-left: 3px;
    line-height: 14px;
    background:
        linear-gradient(#6c6c6c, #6c6c6c) 0 0 / 1px 100% no-repeat,
        linear-gradient(#6c6c6c, #6c6c6c) 36px 100% / 1px 7px no-repeat,
        repeating-linear-gradient(90deg, #6c6c6c 0 1px, transparent 1px 9px) 0 100% / 100% 4px no-repeat;
}
.ruler-h span:first-child {
    margin-left: -50px;
}
.ruler-v {
    flex-direction: column;
}
.ruler-v span {
    height: 72px;
    flex: none;
    display: flex;
    flex-direction: column;
    justify-content: flex-end;
    padding-left: 2px;
    line-height: 12px;
    background:
        linear-gradient(#6c6c6c, #6c6c6c) 0 100% / 100% 1px no-repeat,
        linear-gradient(#6c6c6c, #6c6c6c) 100% 35px / 7px 1px no-repeat,
        repeating-linear-gradient(0deg, #6c6c6c 0 1px, transparent 1px 9px) 100% 0 / 4px 100% no-repeat;
}
.ruler-v span:first-child {
    margin-top: -52px;
}
.ruler-v .whole {
    font-size: 10px;
    line-height: 11px;
    padding-bottom: 2px;
}
.ruler-v b {
    font-weight: 400;
}
.canvas {
    position: relative;
    min-width: 0;
    min-height: 0;
    overflow: hidden;
    padding: 0 0 13px 379px;
    background: #5f5f5f;
}
.artboard {
    height: 100%;
    overflow: hidden;
    background: #fff;
    border-left: 6px solid #000;
    border-bottom: 6px solid #000;
    border-radius: 0 0 0 3px;
}
.map-text {
    font-family: "Liberation Sans", Arial, sans-serif;
    font-size: 80px;
    fill: #000;
}
.map-line {
    fill: none;
    stroke: #000;
    stroke-width: 8;
}
.scroll-v,
.scroll-h {
    display: flex;
    justify-content: space-between;
    align-items: center;
    background: #4a4a4a;
    fill: none;
    stroke: #a0a0a0;
}
.scroll-v {
    grid-column: 3;
    grid-row: 1 / 3;
    flex-direction: column;
    padding: 6px 0;
}
.scroll-v i {
    width: 14px;
    height: 26px;
    margin-top: 236px;
    border-radius: 7px;
    background: #646464;
}

/* Infos panel */
.infos {
    position: absolute;
    left: 1034px;
    top: 856px;
    width: 259px;
    border: 1px solid #383838;
    border-radius: 4px 4px 0 0;
    background: #535353;
    box-shadow: 0 2px 5px rgba(0, 0, 0, 0.3);
    overflow: hidden;
    color: #dedede;
    font-size: 11px;
}
.infos-head {
    height: 13px;
    display: flex;
    justify-content: space-between;
    align-items: center;
    padding: 0 6px 0 4px;
    border-bottom: 1px solid #383838;
    background: #424242;
    fill: none;
    stroke: #bbb;
}
.infos-tabs {
    height: 27px;
    display: flex;
    align-items: center;
    background: #424242;
}
.infos-tabs button {
    height: 27px;
    display: flex;
    align-items: center;
    justify-content: center;
    gap: 5px;
    width: 72px;
    border-right: 1px solid #383838;
    border-bottom: 1px solid #383838;
    color: #b4b4b4;
    font-size: 10px;
    font-weight: 700;
}
.infos-tabs .current {
    width: 49px;
    gap: 4px;
    border-bottom: none;
    background: #535353;
    color: #fff;
}
.burger {
    margin: 0 6px 0 auto;
}
.infos-grid {
    display: grid;
    grid-template-columns: 14px 110px 14px 1fr;
    column-gap: 5px;
    align-items: center;
    height: 47px;
    margin: 0 5px;
    padding-bottom: 2px;
    border-bottom: 1px solid #474747;
    background: linear-gradient(#474747, #474747) 127px 50% / 1px 36px no-repeat;
}
.infos-grid.last {
    height: 27px;
    border: none;
    background-size: 1px 16px;
}
.infos-grid dl {
    display: grid;
    grid-template-columns: 20px 1fr;
    line-height: 19px;
    margin: 0;
}
.infos-grid dt {
    display: flex;
    align-items: center;
}
.infos-grid dd {
    margin: 0;
}

/* Status bar */
.statusbar {
    height: 16px;
    flex: none;
    display: flex;
    align-items: stretch;
    background: #4a4a4a;
}
.statusbar svg {
    align-self: center;
}
.statusbar input {
    padding-top: 2px;
    background: #434343;
    color: #e6e6e6;
}
.zoom {
    width: 50px;
    margin-left: 4px;
    text-indent: 3px;
}
.page {
    width: 40px;
    text-indent: 4px;
}
.drop {
    width: 18px;
    display: flex;
    justify-content: center;
    border: solid #383838;
    border-width: 0 1px;
    fill: none;
    stroke: #e0e0e0;
}
.nav-arrows {
    fill: #6e6e6e;
}
.message {
    width: 199px;
    text-align: center;
    line-height: 18px;
    background: #4f4f4f;
    border: solid #424242;
    border-width: 0 1px;
}
.play {
    width: 19px;
    display: flex;
    justify-content: center;
    background: #535353;
    fill: #ddd;
}
.scroll-h {
    flex: 1;
    margin-right: 16px;
    padding: 0 5px;
}
.scroll-h i {
    width: 25px;
    height: 15px;
    margin-right: 604px;
    border-radius: 7px;
    background: #646464;
}

/* Panels */
.panels {
    width: 125px;
    flex: none;
    border-left: 3px solid #3c3c3c;
    border-right: 1px solid #3c3c3c;
}
.panels .collapse {
    height: 13px;
    text-align: right;
}
.group {
    padding-bottom: 2px;
    border-bottom: 1px solid #3a3a3a;
}
.panels .group .grip {
    margin: 0 auto;
    border-top: 4px solid #535353;
    border-bottom: 2px solid #535353;
    height: 10px;
}
.group button {
    display: flex;
    align-items: center;
    gap: 8px;
    width: 100%;
    height: 28px;
    padding-left: 9px;
    color: #f0f0f0;
    font-weight: 700;
}
.group svg {
    width: 20px;
    height: 20px;
    fill: #c8c8c8;
    overflow: visible;
}

/* Dock */
.desktop {
    height: 77px;
    flex: none;
    background: linear-gradient(90deg, #1c2f12, #29401a 50%, #24230f 98%, #33451c);
}
.dock {
    height: 77px;
    margin: 0 55px;
    padding: 0 3px;
    display: flex;
    border-radius: 5px 5px 0 0;
    background: linear-gradient(90deg, #5c7a4c, #657a50 17%, #719f45 25%, #6a9148 40%, #75857a 48%, #67854a 54%, #6f9f42 70%, #6a9245 84%, #667852 95%, #66784f);
}
.dock button {
    position: relative;
    flex: 1;
    min-width: 0;
    height: 70px;
    display: flex;
    align-items: center;
    justify-content: center;
}
.dock button > svg {
    width: 60px;
    height: 60px;
}
.dock .running::before {
    content: "";
    position: absolute;
    left: 50%;
    bottom: -5px;
    width: 4px;
    height: 4px;
    margin-left: -2px;
    border-radius: 50%;
    background: #000;
}
.rule {
    width: 1px;
    height: 58px;
    margin: 10px 14px;
    background: #43602b;
}
.art-a {
    font-family: "Liberation Serif", serif;
    font-size: 72px;
    font-weight: 700;
    font-style: italic;
    fill: #fff;
}
.office {
    font-size: 26px;
    font-weight: 700;
    fill: #fff;
}
.dock .tile {
    gap: 1px;
}
.tile i {
    width: 18px;
    height: 62px;
    border: 2px solid #000;
    border-left: none;
    background: #174962;
}
.tile i + i {
    width: 43px;
    border-left: 2px solid #000;
}
.adobe {
    isolation: isolate;
    font-size: 29px;
}
.adobe::after {
    content: "";
    position: absolute;
    z-index: -1;
    inset: 9px 6px;
    border: 2px solid currentColor;
    box-shadow: 0 1px 2px rgba(0, 0, 0, 0.4);
    background: var(--back);
}
.dock .adobe {
    font-size: 29px;
    font-weight: 500;
}
.dock .adobe > svg {
    width: 36px;
    height: 36px;
}
.ae { color: #cf96fd; --back: #1f0740; }
.an { color: #f93822; --back: #270400; }
.au { color: #22e3b5; --back: #04251f; }
.br { color: #fbb324; --back: #2a1c04; }
.ch { color: #d28cf9; --back: #2b0440; }
.dw { color: #6bf825; --back: #10230b; }
.ai { color: #ff7c1f; --back: #271205; }
.id { color: #ff3d8e; --back: #28030f; }
.lr { color: #aed6f0; --back: #0e2632; }
.me { color: #a39bff; --back: #0d054a; }
.mu { color: #c4e62c; --back: #202504; }
.ps { color: #22bdf5; --back: #031d27; }
.pl { color: #22d8f5; --back: #042128; }
.pr { color: #e678fb; --back: #2a0433; }
```
